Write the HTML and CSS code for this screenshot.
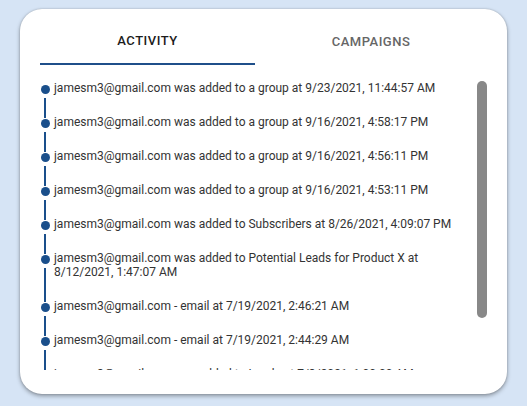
FILE: index.html
```html
<!DOCTYPE html>
<html>
<head>
<meta charset="utf-8">
<link rel="stylesheet" href="styles.css">
</head>
<body>
<div class="card">
  <div class="tabs">
    <div class="tab active">Activity</div>
    <div class="tab">Campaigns</div>
  </div>
  <div class="body">
    <div class="list">
      <div class="item"><div class="rail"><span class="dot"></span><span class="line"></span></div><div class="text">jamesm3@gmail.com was added to a group at 9/23/2021, 11:44:57 AM</div></div>
      <div class="item"><div class="rail"><span class="dot"></span><span class="line"></span></div><div class="text">jamesm3@gmail.com was added to a group at 9/16/2021, 4:58:17 PM</div></div>
      <div class="item"><div class="rail"><span class="dot"></span><span class="line"></span></div><div class="text">jamesm3@gmail.com was added to a group at 9/16/2021, 4:56:11 PM</div></div>
      <div class="item"><div class="rail"><span class="dot"></span><span class="line"></span></div><div class="text">jamesm3@gmail.com was added to a group at 9/16/2021, 4:53:11 PM</div></div>
      <div class="item"><div class="rail"><span class="dot"></span><span class="line"></span></div><div class="text">jamesm3@gmail.com was added to Subscribers at 8/26/2021, 4:09:07 PM</div></div>
      <div class="item"><div class="rail"><span class="dot"></span><span class="line"></span></div><div class="text">jamesm3@gmail.com was added to Potential Leads for Product X at 8/12/2021, 1:47:07 AM</div></div>
      <div class="item"><div class="rail"><span class="dot"></span><span class="line"></span></div><div class="text">jamesm3@gmail.com - email at 7/19/2021, 2:46:21 AM</div></div>
      <div class="item"><div class="rail"><span class="dot"></span><span class="line"></span></div><div class="text">jamesm3@gmail.com - email at 7/19/2021, 2:44:29 AM</div></div>
      <div class="item"><div class="rail"><span class="dot"></span><span class="line"></span></div><div class="text">jamesm3@gmail.com was added to Leads at 7/3/2021, 1:00:00 AM</div></div>
    </div>
    <div class="scrollbar"><div class="thumb"></div></div>
  </div>
</div>
</body>
</html>
```
FILE: styles.css
```css
html, body {
  margin: 0;
  padding: 0;
}
body {
  background: #d6e4f5;
  font-family: Roboto, "Liberation Sans", sans-serif;
  width: 527px;
  height: 406px;
  overflow: hidden;
  padding-top: 9px;
  padding-left: 20px;
  box-sizing: border-box;
}
.card {
  width: 487px;
  height: 385px;
  box-sizing: border-box;
  background: #fff;
  border-radius: 22px;
  box-shadow: 0 2px 4px rgba(0,0,0,0.35), 0 0 2px rgba(0,0,0,0.2);
  padding: 8px 20px 0 20px;
  display: flex;
  flex-direction: column;
}
.tabs {
  display: grid;
  grid-template-columns: 215px 1fr;
  height: 48px;
}
.tab {
  display: flex;
  align-items: center;
  justify-content: center;
  text-transform: uppercase;
  font-size: 13px;
  font-weight: 500;
  letter-spacing: 0.5px;
  color: #666;
}
.tab.active {
  color: #1c1c1c;
  border-bottom: 2px solid #1f4f8a;
  padding-top: 1px;
}
.body {
  display: flex;
  height: 305px;
}
.list {
  flex: 1;
  overflow: hidden;
  padding-top: 16px;
}
.item {
  display: flex;
  gap: 4px;
}
.rail {
  width: 10px;
  display: flex;
  flex-direction: column;
  align-items: center;
}
.dot {
  width: 9px;
  height: 9px;
  border-radius: 50%;
  background: #1a4f8b;
  margin-top: 4px;
  flex: none;
}
.line {
  flex: 1;
  width: 2px;
  background: #1a4f8b;
  margin: 4px 0 -3px;
}
.text {
  flex: 1;
  font-size: 12px;
  line-height: 14px;
  color: #333;
  padding-bottom: 20px;
  padding-right: 12px;
}
.scrollbar {
  width: 10px;
  flex: none;
  padding-top: 16px;
}
.thumb {
  height: 237px;
  background: #888;
  border-radius: 5px;
}
```
